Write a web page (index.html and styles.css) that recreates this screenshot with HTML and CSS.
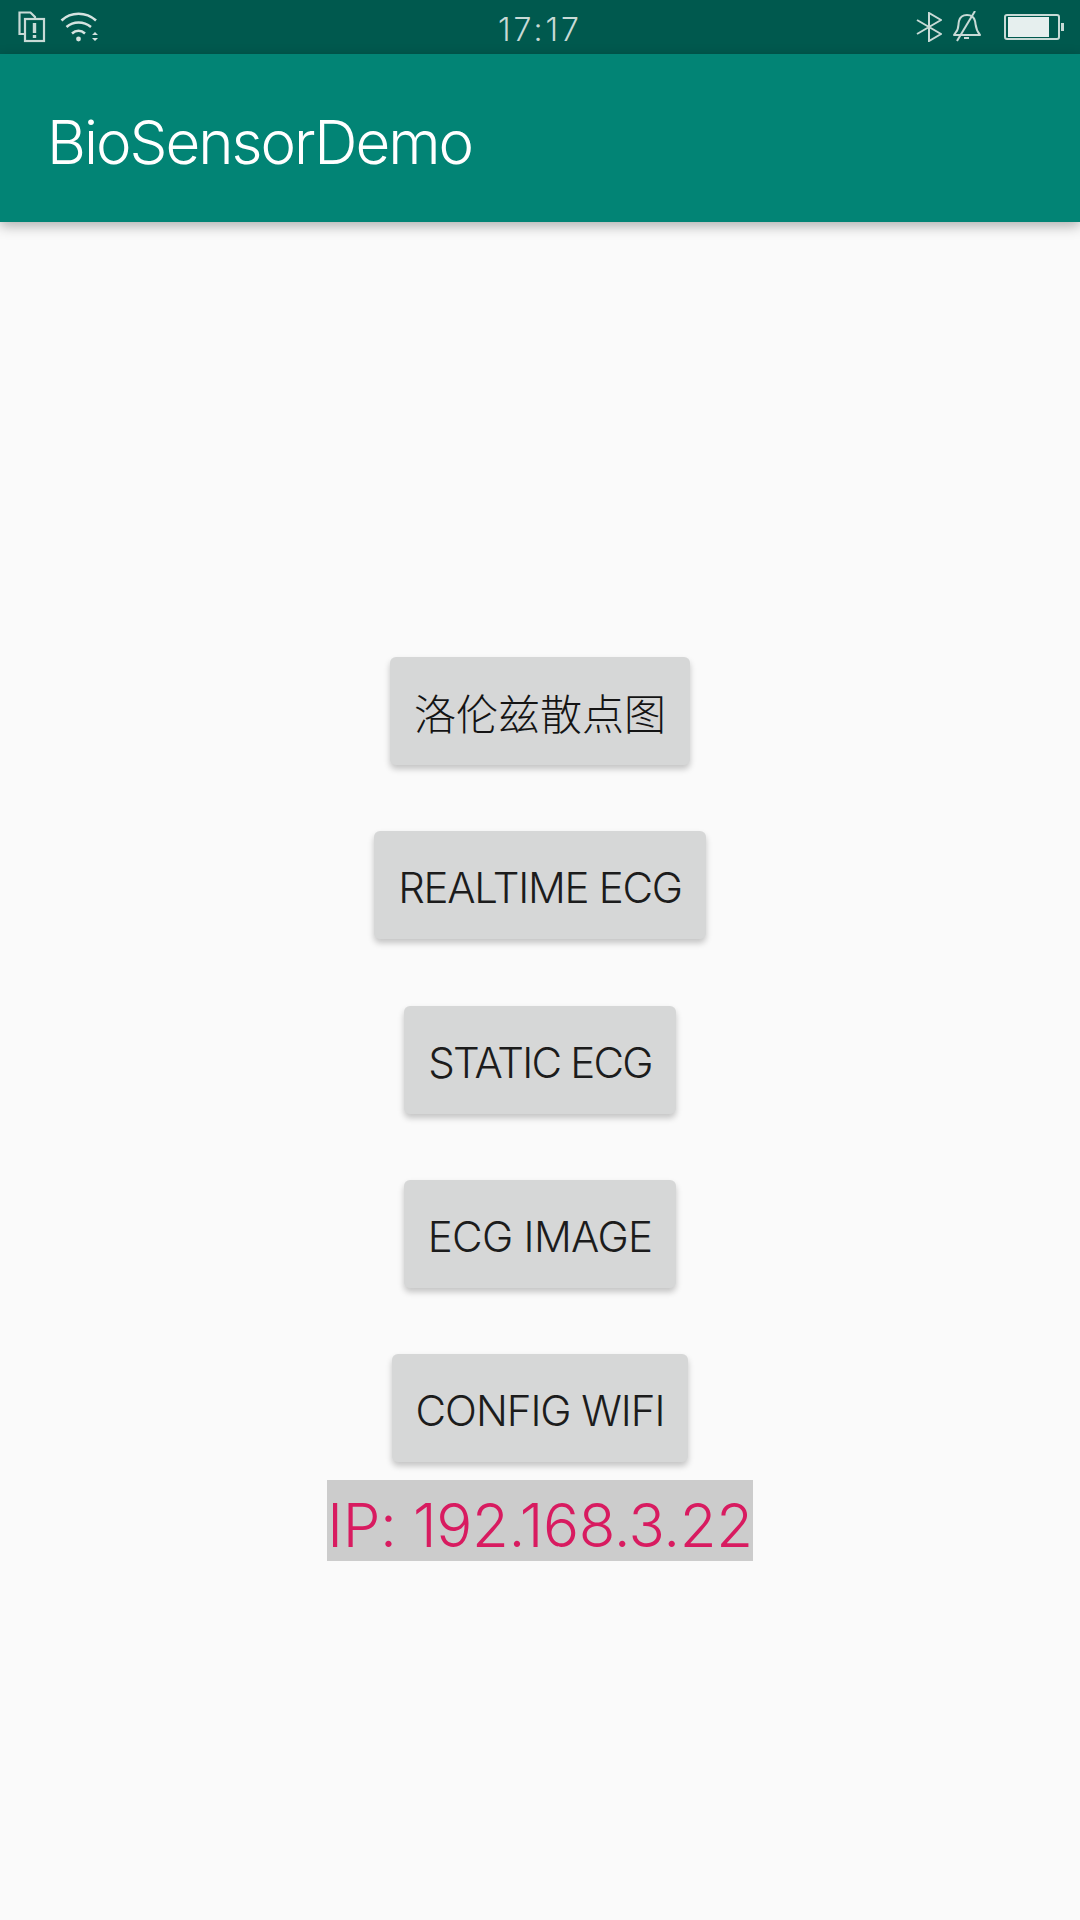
FILE: index.html
```
<!DOCTYPE html>
<html lang="zh">
<head>
<meta charset="utf-8">
<title>BioSensorDemo</title>
<link rel="stylesheet" href="styles.css">
</head>
<body>
<div class="status">
  <div class="status-left">
    <svg class="ic-sim" width="28" height="32" viewBox="0 0 28 32" fill="none" stroke="#c8dad6" stroke-width="2.2">
      <path d="M7 23H1.5V1.5H12.5L17 6V8"/>
      <rect x="7" y="8" width="19" height="22"/>
      <path d="M16.5 12V22" stroke-width="3.4"/>
      <path d="M16.5 24V27" stroke-width="3.4"/>
    </svg>
    <svg class="ic-wifi" width="38" height="30" viewBox="0 0 38 30" fill="none" stroke="#d5e3e0" stroke-width="2.6">
      <path d="M1.5 8.5C11 -0.5 26 -0.5 36 8.5"/>
      <path d="M6.5 15C13.500 9 23.500 9 31 15"/>
      <path d="M12 21.500C16 18 21 18 25 21.500"/>
      <circle cx="18.500" cy="27" r="2.400" fill="#d5e3e0" stroke="none"/>
      <path d="M32 23L35 20L38 23ZM32 26H38L35 29Z" fill="#d5e3e0" stroke="none"/>
    </svg>
  </div>
  <div class="clock">17:17</div>
  <div class="status-right">
    <svg class="ic-bt" width="26" height="30" viewBox="0 0 26 30" fill="none" stroke="#c8dad6" stroke-width="2">
      <path d="M1 8L25 22L13 29V1L25 8L1 22"/>
    </svg>
    <svg class="ic-bell" width="30" height="32" viewBox="0 0 30 32" fill="none" stroke="#c8dad6" stroke-width="2">
      <path d="M4 21C7 18 6 14 7 10C8 6 11 4 15 4C19 4 22 6 23 10C24 14 23 18 28 24H2Z" stroke-linejoin="round"/>
      <path d="M23 0L5 30"/>
      <path d="M12 27H17"/>
    </svg>
    <div class="battery"><div class="battery-fill"></div></div>
    <div class="battery-tip"></div>
  </div>
</div>
<header class="appbar">BioSensorDemo</header>
<main class="content">
  <div class="btn btn-cjk">洛伦兹散点图</div>
  <div class="btn btn-realtime">REALTIME ECG</div>
  <div class="btn btn-static">STATIC ECG</div>
  <div class="btn btn-image">ECG IMAGE</div>
  <div class="btn btn-config">CONFIG WIFI</div>
  <div class="ip">IP: 192.168.3.22</div>
</main>
</body>
</html>
```
FILE: styles.css
```
* { box-sizing: border-box; }
html, body { margin: 0; height: 100%; }
body {
  width: 1080px;
  height: 1920px;
  background: #fafafa;
  font-family: Inter, "Noto Sans CJK SC", sans-serif;
  overflow: hidden;
}
.status {
  height: 54px;
  background: #00594e;
  display: grid;
  grid-template-columns: 1fr auto 1fr;
  align-items: center;
  color: #c8dad6;
}
.status-left {
  display: flex;
  align-items: center;
  gap: 14px;
  padding-left: 18px;
}
.clock {
  font-size: 32px;
  font-weight: 300;
  letter-spacing: 3px;
  padding-top: 4px;
}
.status-right {
  display: flex;
  align-items: center;
  justify-content: flex-end;
  padding-right: 16px;
}
.ic-bell { margin-left: 10px; }
.battery {
  width: 56px;
  height: 26px;
  margin-left: 22px;
  border: 2px solid #c8dad6;
  border-radius: 3px;
  padding: 1px 2px;
}
.battery-fill {
  width: 41px;
  height: 100%;
  background: #e6efee;
}
.battery-tip {
  width: 3px;
  height: 8px;
  margin-left: 1px;
  background: #c8dad6;
}
.appbar {
  height: 168px;
  padding: 7px 0 0 47px;
  background: #028475;
  color: #fff;
  font-size: 60px;
  font-weight: 300;
  letter-spacing: -2px;
  display: flex;
  align-items: center;
  box-shadow: 0 4px 12px rgba(0, 0, 0, 0.3);
  position: relative;
}
.content {
  display: flex;
  flex-direction: column;
  align-items: center;
  padding-top: 435px;
}
.btn {
  height: 108px;
  padding: 5px 24px 0;
  margin-bottom: 66.25px;
  background: #d6d7d7;
  border-radius: 6px;
  display: flex;
  align-items: center;
  color: #1c1c1c;
  font-size: 42px;
  font-weight: 300;
  box-shadow: 0 4px 6px rgba(0, 0, 0, 0.22);
}
.btn-cjk { padding-top: 1px; color: #141414; }
.btn-realtime { letter-spacing: -1.27px; }
.btn-static { letter-spacing: -1.8px; }
.btn-image { letter-spacing: -0.7px; }
.btn-config { letter-spacing: -1.05px; margin-bottom: 18px; }
.ip {
  height: 81px;
  padding-top: 8px;
  display: flex;
  align-items: center;
  background: #cccccc;
  color: #d81b60;
  font-size: 60px;
  font-weight: 300;
  letter-spacing: -0.38px;
}
```
